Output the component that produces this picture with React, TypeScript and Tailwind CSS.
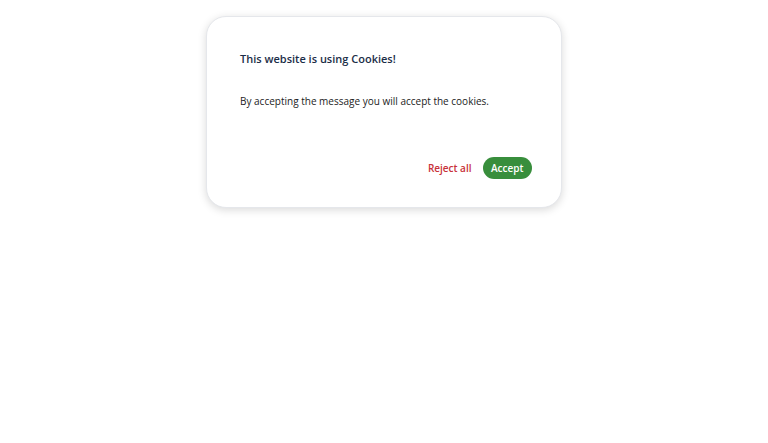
export default function App() {
	return (
		<div className="min-h-screen bg-white pt-4 flex justify-center" style={{ fontFamily: '"Open Sans", sans-serif' }}>
			<div className="w-[356px] h-[192px] rounded-[20px] bg-white border border-gray-200 shadow-[0_2px_8px_rgba(0,0,0,0.15)] pl-[33px] pr-[29px] pt-[34px] flex flex-col">
				<h2 className="text-[11px] font-semibold text-[#1b2d47] leading-4">
					This website is using Cookies!
				</h2>
				<p className="mt-[26px] text-[10px] text-[#222] leading-4">
					By accepting the message you will accept the cookies.
				</p>
				<div className="mt-auto mb-[28px] flex items-center justify-end gap-[11px]">
					<button className="text-[10px] font-semibold text-[#c8323a]">Reject all</button>
					<button className="h-[22px] px-[8.5px] rounded-full bg-[#388e3c] text-white text-[10px] font-semibold">
						Accept
					</button>
				</div>
			</div>
		</div>
	);
}
